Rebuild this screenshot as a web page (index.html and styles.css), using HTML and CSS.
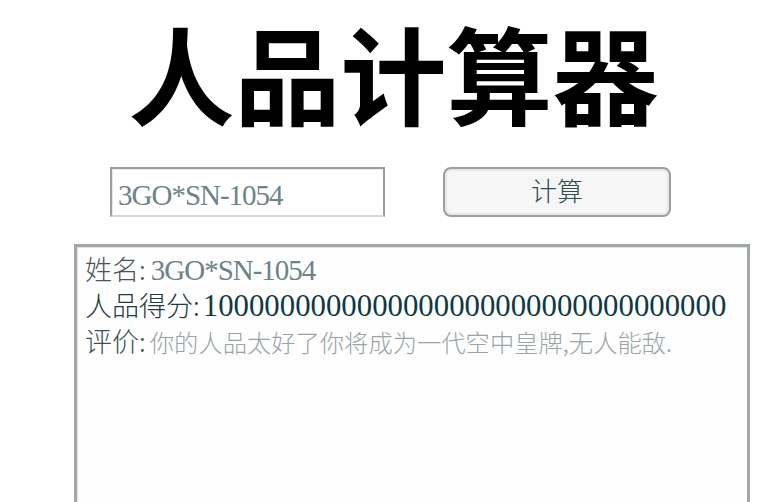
FILE: index.html
```html
<!DOCTYPE html>
<html lang="zh-CN">
<head>
<meta charset="utf-8">
<title>人品计算器</title>
<link rel="stylesheet" href="styles.css">
</head>
<body>
<main class="page">
  <h1 class="title">人品计算器</h1>
  <form class="calc-row">
    <div class="name-input">3GO*SN-1054</div>
    <button type="button" class="calc-btn">计算</button>
  </form>
  <section class="result">
    <div class="line"><span class="label l1">姓名:</span><span class="val v1">3GO*SN-1054</span></div>
    <div class="line"><span class="label l2">人品得分:</span><span class="val v2">1000000000000000000000000000000000</span></div>
    <div class="line"><span class="label l3">评价:</span><span class="comment">你的人品太好了你将成为一代空中皇牌,无人能敌.</span></div>
  </section>
</main>
</body>
</html>
```
FILE: styles.css
```css
html, body {
  margin: 0;
  padding: 0;
  background: #ffffff;
  overflow: hidden;
}
.page {
  width: 757px;
  height: 502px;
  display: flex;
  flex-direction: column;
}
.title {
  margin: 9px 0 0 0;
  padding-left: 30px;
  text-align: center;
  font-family: "Noto Sans CJK SC", sans-serif;
  font-weight: 600;
  font-size: 106px;
  line-height: 124px;
  letter-spacing: 0;
  color: #000;
}
.calc-row {
  display: flex;
  margin: 34px 0 0 110px;
  gap: 58px;
}
.name-input {
  box-sizing: border-box;
  width: 275px;
  height: 50px;
  border: 2px solid #999e9f;
  border-bottom-color: #d3d7d7;
  box-shadow: inset 1px 1px 0 #e6e9e9;
  padding: 9px 0 0 6px;
  font-family: "Liberation Serif", serif;
  font-size: 29px;
  letter-spacing: -1px;
  line-height: 34px;
  color: #6d8388;
  background: #fff;
}
.calc-btn {
  box-sizing: border-box;
  width: 228px;
  height: 50px;
  border: 2px solid #9aa0a0;
  border-radius: 8px;
  box-shadow: inset 0 0 0 2px #e4e8e8;
  background: #f6f6f6;
  font-family: "Noto Sans CJK SC", sans-serif;
  font-size: 26px;
  font-weight: 300;
  color: #2f4d54;
  padding: 0 0 6px 0;
}
.result {
  box-sizing: border-box;
  margin: 27px 0 0 74px;
  width: 676px;
  flex: 1;
  border: 3px solid #a2a8a8;
  border-bottom: none;
  box-shadow: inset 1px 1px 0 #dfe3e3;
  padding: 4px 0 0 8px;
  background: #fefefe;
}
.line {
  height: 36px;
  line-height: 36px;
  white-space: nowrap;
}
.label {
  font-family: "Noto Sans CJK SC", sans-serif;
  font-weight: 300;
  font-size: 27px;
}
.l1 { color: #4a5558; }
.l2 { color: #223a40; }
.l3 { color: #3a5258; }
.val {
  font-family: "Liberation Serif", serif;
}
.v1 {
  color: #6d8388;
  font-size: 29px;
  letter-spacing: -1px;
  margin-left: 5px;
}
.v2 {
  color: #0f3a44;
  font-size: 30.8px;
  margin-left: 3px;
}
.comment {
  font-family: "Noto Sans CJK SC", sans-serif;
  font-weight: 300;
  font-size: 24.3px;
  color: #9aa4a7;
  margin-left: 4px;
}
```
